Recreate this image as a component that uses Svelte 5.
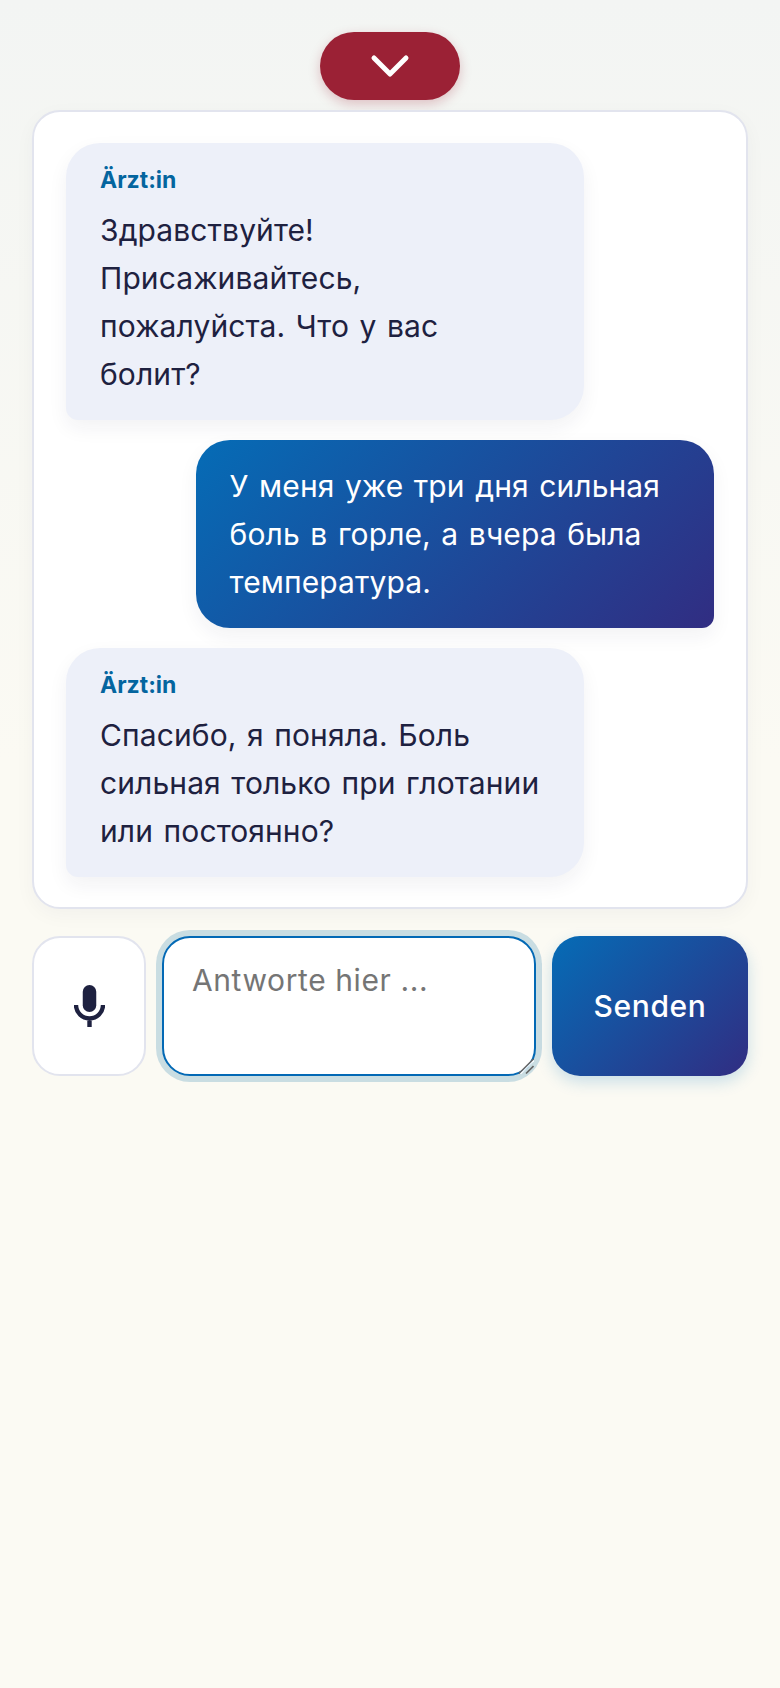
<script>
  const messages = [
    { from: 'doctor', text: 'Здравствуйте! Присаживайтесь, пожалуйста. Что у вас болит?' },
    { from: 'me', text: 'У меня уже три дня сильная боль в горле, а вчера была температура.' },
    { from: 'doctor', text: 'Спасибо, я поняла. Боль сильная только при глотании или постоянно?' }
  ]
</script>

<main>
  <button class="collapse" aria-label="Einklappen">
    <svg viewBox="0 0 40 24" fill="none" stroke="white" stroke-width="5" stroke-linecap="round" stroke-linejoin="round" aria-hidden="true">
      <path d="M4 4l16 16 16-16" />
    </svg>
  </button>

  <section class="chat">
    {#each messages as m}
      <article class={m.from}>
        {#if m.from === 'doctor'}
          <h3>Ärzt:in</h3>
        {/if}
        <p>{m.text}</p>
      </article>
    {/each}
  </section>

  <form class="composer">
    <button type="button" class="mic" aria-label="Spracheingabe">
      <svg viewBox="0 0 31 42" fill="none" aria-hidden="true">
        <rect x="8.75" y="0" width="13.5" height="27" rx="6.75" fill="#1e2140" />
        <path d="M2 20a13.5 13.5 0 0 0 27 0M15.5 33v9" stroke="#1e2140" stroke-width="4.4" />
      </svg>
    </button>
    <div class="field">
      <textarea placeholder="Antworte hier ..."></textarea>
      <svg class="grip" viewBox="0 0 16 16" aria-hidden="true">
        <path d="M1 15.5L15.5 1" stroke="#666" stroke-width="1.6" />
        <path d="M2.5 16L16 2.5" stroke="white" stroke-width="1.2" />
        <path d="M8 15.5L15.5 8" stroke="#666" stroke-width="1.6" />
      </svg>
    </div>
    <button type="button" class="send">Senden</button>
  </form>
</main>

<style>
  :global(body) {
    margin: 0;
    background: linear-gradient(180deg, #f3f5f3 0, #fbfaf3 760px);
    min-height: 1688px;
  }

  main {
    box-sizing: border-box;
    display: flex;
    flex-direction: column;
    padding: 32px 32px 0;
    font-family: Inter, "Liberation Sans", sans-serif;
    color: #1e2140;
  }

  button {
    font-family: inherit;
    cursor: pointer;
  }

  .collapse {
    align-self: center;
    display: flex;
    align-items: center;
    justify-content: center;
    width: 140px;
    height: 68px;
    margin-bottom: 10px;
    padding: 0;
    border: none;
    border-radius: 34px;
    background: #9b2135;
    box-shadow: 0 4px 12px rgba(155, 33, 53, 0.25);
  }

  .collapse svg {
    width: 40px;
    height: 24px;
  }

  .chat {
    display: flex;
    flex-direction: column;
    gap: 20px;
    padding: 31px 32px 30px;
    background: white;
    border: 2px solid #e2e4ee;
    border-radius: 28px;
    box-shadow: 0 6px 20px rgba(30, 33, 64, 0.04);
  }

  article {
    box-sizing: border-box;
    width: 80%;
    padding: 22px 36px 22px 34px;
    border-radius: 34px;
    box-shadow: 0 8px 20px rgba(30, 33, 64, 0.06);
  }

  article.doctor {
    align-self: flex-start;
    padding-top: 21px;
    background: #edf0f9;
    border-bottom-left-radius: 12px;
  }

  article.me {
    align-self: flex-end;
    background: linear-gradient(135deg, #056cb6, #312d82);
    color: white;
    border-bottom-right-radius: 12px;
  }

  h3 {
    margin: 0 0 9px;
    font-size: 23px;
    line-height: 33px;
    font-weight: 700;
    color: #04659f;
  }

  p {
    margin: 0;
    font-size: 30px;
    line-height: 48px;
    letter-spacing: 0.1px;
    word-spacing: 2px;
  }

  .composer {
    display: flex;
    gap: 16px;
    margin-top: 27px;
    height: 140px;
  }

  .mic {
    display: flex;
    align-items: center;
    justify-content: center;
    width: 114px;
    flex: none;
    padding: 0;
    background: white;
    border: 2px solid #e2e4ee;
    border-radius: 28px;
  }

  .mic svg {
    width: 31px;
    height: 42px;
  }

  .field {
    position: relative;
    flex: 1;
    min-width: 0;
    display: flex;
  }

  textarea {
    box-sizing: border-box;
    width: 100%;
    padding: 20px 28px;
    font-family: inherit;
    font-size: 30px;
    line-height: 45px;
    letter-spacing: 0.6px;
    color: #1e2140;
    background: white;
    border: 2px solid #0369b5;
    border-radius: 28px;
    outline: none;
    resize: none;
    box-shadow: 0 0 0 6px rgba(3, 105, 161, 0.2);
  }

  textarea::placeholder {
    color: #757575;
  }

  .grip {
    position: absolute;
    right: 2px;
    bottom: 2px;
    width: 16px;
    height: 16px;
  }

  .send {
    width: 196px;
    flex: none;
    padding: 0;
    border: none;
    border-radius: 28px;
    font-size: 30px;
    font-weight: 500;
    letter-spacing: 0.6px;
    color: white;
    background: linear-gradient(135deg, #056cb6, #312d82);
    box-shadow: 0 6px 16px rgba(5, 114, 187, 0.2);
  }
</style>
